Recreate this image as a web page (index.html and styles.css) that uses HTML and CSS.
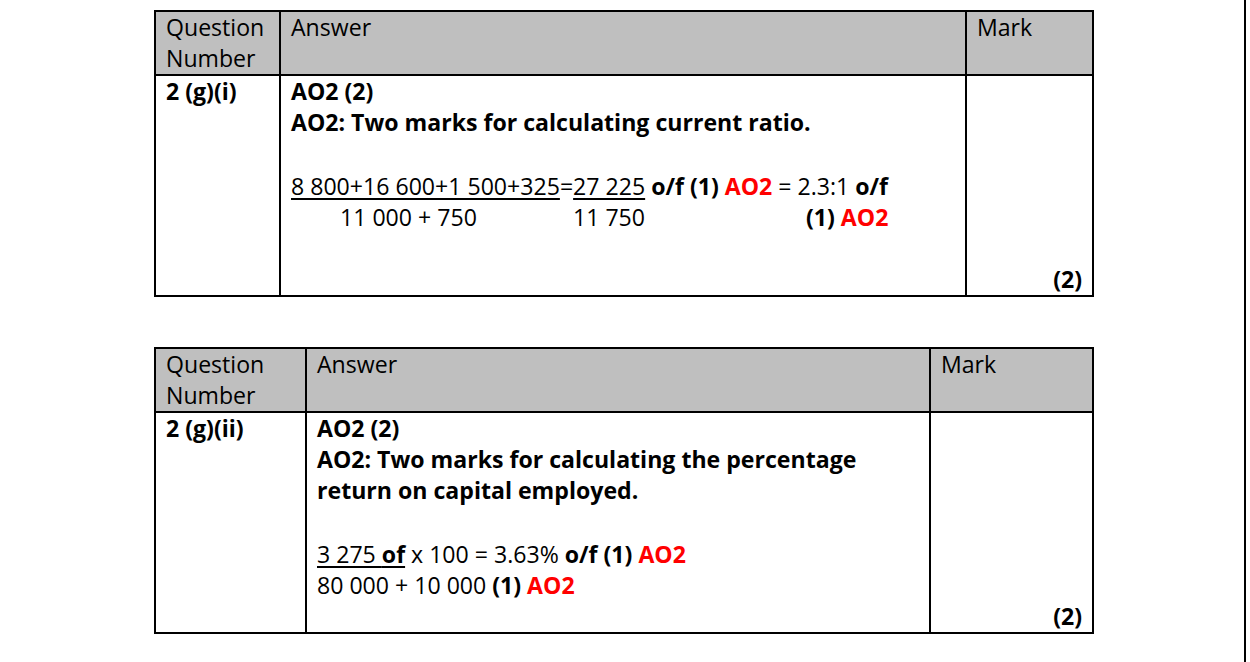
FILE: index.html
```html
<!DOCTYPE html>
<html lang="en">
<head>
<meta charset="utf-8">
<title>Mark scheme</title>
<link rel="stylesheet" href="styles.css">
</head>
<body>
<div class="page">
  <div class="ms ms-one">
    <div class="cell head">Question<br>Number</div>
    <div class="cell head">Answer</div>
    <div class="cell head">Mark</div>

    <div class="cell qn"><b>2 (g)(i)</b></div>
    <div class="cell ans ans-one">
      <div class="line"><b>AO2 (2)</b></div>
      <div class="line"><b>AO2: Two marks for calculating current ratio.</b></div>
      <div class="line gap"></div>
      <div class="line"><u>8 800+16 600+1 500+325</u>=<u>27 225</u> <b>o/f (1)</b> <b class="red">AO2</b> = 2.3:1 <b>o/f</b></div>
      <div class="line denoms">
        <span class="d1">11 000 + 750</span><span class="d2">11 750</span><span class="d3"><b>(1)</b> <b class="red">AO2</b></span>
      </div>
    </div>
    <div class="cell mark"><b>(2)</b></div>
  </div>

  <div class="ms ms-two">
    <div class="cell head">Question<br>Number</div>
    <div class="cell head">Answer</div>
    <div class="cell head">Mark</div>

    <div class="cell qn"><b>2 (g)(ii)</b></div>
    <div class="cell ans ans-two">
      <div class="line"><b>AO2 (2)</b></div>
      <div class="line"><b>AO2: Two marks for calculating the percentage</b></div>
      <div class="line"><b>return on capital employed.</b></div>
      <div class="line gap"></div>
      <div class="line"><u>3 275 <b>of</b></u> x 100 = 3.63% <b>o/f (1)</b> <b class="red">AO2</b></div>
      <div class="line">80 000 + 10 000 <b>(1)</b> <b class="red">AO2</b></div>
    </div>
    <div class="cell mark"><b>(2)</b></div>
  </div>
</div>
</body>
</html>
```

FILE: styles.css
```css
* { box-sizing: border-box; }

html, body {
  margin: 0;
  padding: 0;
  background: #fff;
}

body {
  font-family: "Open Sans", "Noto Sans", sans-serif;
  font-size: 23.1px;
  line-height: 31px;
  color: #000;
}

.page {
  width: 1246px;
  height: 662px;
  border-right: 2px solid #000;
  padding: 10px 0 0 154px;
}

.ms {
  display: grid;
  width: 940px;
  border-left: 2px solid #000;
  border-top: 2px solid #000;
}

.ms-one {
  grid-template-columns: 125px 686px 127px;
}

.ms-two {
  margin-top: 50px;
  grid-template-columns: 151px 624px 163px;
}

.cell {
  border-right: 2px solid #000;
  border-bottom: 2px solid #000;
  padding: 0 10px;
}

.head {
  background: #bfbfbf;
  height: 64px;
}

.qn {
  padding-left: 10px;
}

.ans-one {
  padding-bottom: 62px;
  padding-left: 10px;
}

.ans-two {
  padding-bottom: 31px;
  padding-left: 10px;
}

.line {
  min-height: 31px;
  white-space: nowrap;
}

.line.gap {
  min-height: 33px;
}

.red {
  color: #ff0000;
}

u {
  text-decoration-thickness: 2px;
  text-underline-offset: 3px;
}

.denoms {
  display: flex;
}

.d1 {
  width: 282px;
  padding-left: 49px;
}

.d2 {
  width: 233px;
}

.mark {
  display: flex;
  flex-direction: column;
  justify-content: flex-end;
  align-items: flex-end;
  padding-right: 10px;
}
```
